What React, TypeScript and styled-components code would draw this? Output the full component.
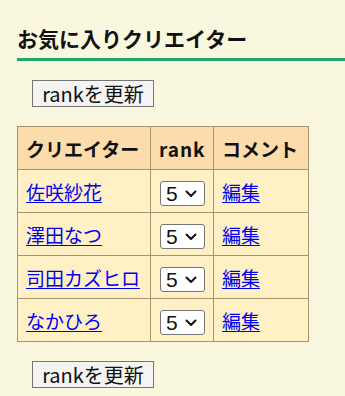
import React from "react";
import styled, { createGlobalStyle } from "styled-components";

const creators = ["佐咲紗花", "澤田なつ", "司田カズヒロ", "なかひろ"];

const GlobalStyle = createGlobalStyle`
  html, body {
    margin: 0;
    padding: 0;
    background: #f9f8df;
  }
  body {
    font-family: "Noto Sans CJK JP", "Liberation Sans", sans-serif;
    color: #111;
  }
`;

const Page = styled.div`
  padding: 24px 0 0 17px;
  overflow: hidden;
`;

const Title = styled.h2`
  margin: 0;
  font-size: 21px;
  font-weight: 700;
  line-height: 29px;
  padding-bottom: 5px;
  border-bottom: 3px solid #1ba86b;
`;

const UpdateButton = styled.button`
  display: block;
  box-sizing: border-box;
  width: 122px;
  height: 27px;
  margin-left: 15px;
  padding: 0;
  font-family: "Noto Sans CJK JP", sans-serif;
  font-size: 20px;
  line-height: 25px;
  color: #111;
  background: #f4f4f2;
  border: 1px solid #767676;
  border-radius: 0;
`;

const Top = styled.div`
  padding-top: 19px;
  padding-bottom: 19px;
`;

const Table = styled.table`
  border-collapse: collapse;
  table-layout: fixed;
  font-size: 19px;
  width: 291px;
`;

const HeadCell = styled.th<{ $w: number }>`
  width: ${(p) => p.$w}px;
  height: 43px;
  padding: 0 8px;
  box-sizing: border-box;
  text-align: left;
  font-weight: 700;
  background: #fddcab;
  border: 1px solid #a6946f;
  white-space: nowrap;
`;

const RankHead = styled.span`
  letter-spacing: 1px;
`;

const Cell = styled.td`
  height: 43px;
  padding: 0 8px;
  box-sizing: border-box;
  background: #fff0c6;
  border: 1px solid #a6946f;
  white-space: nowrap;
`;

const Link = styled.a`
  color: #0000ee;
  text-decoration: underline;
  text-underline-offset: 2px;
`;

const SelectBox = styled.div`
  position: relative;
  display: inline-flex;
  align-items: center;
  box-sizing: border-box;
  width: 45px;
  height: 25px;
  margin-left: 1px;
  background: #fff;
  border: 1px solid #767676;
  border-radius: 3px;
  vertical-align: middle;
`;

const Select = styled.select`
  appearance: none;
  border: none;
  background: transparent;
  width: 100%;
  height: 100%;
  padding: 0 0 0 5px;
  font-family: "Liberation Sans", sans-serif;
  font-size: 21px;
  color: #111;
  outline: none;
`;

const Chevron = styled.svg`
  position: absolute;
  right: 7px;
  top: 8px;
  pointer-events: none;
`;

const Bottom = styled.div`
  padding-top: 19px;
`;

export default function App() {
  return (
    <>
      <GlobalStyle />
      <Page>
        <Title>お気に入りクリエイター</Title>
        <Top>
          <UpdateButton>rankを更新</UpdateButton>
        </Top>
        <Table>
          <thead>
            <tr>
              <HeadCell $w={133}>クリエイター</HeadCell>
              <HeadCell $w={63}>
                <RankHead>rank</RankHead>
              </HeadCell>
              <HeadCell $w={95}>コメント</HeadCell>
            </tr>
          </thead>
          <tbody>
            {creators.map((name) => (
              <tr key={name}>
                <Cell>
                  <Link href="#">{name}</Link>
                </Cell>
                <Cell>
                  <SelectBox>
                    <Select defaultValue="5">
                      {[1, 2, 3, 4, 5].map((n) => (
                        <option key={n} value={n}>
                          {n}
                        </option>
                      ))}
                    </Select>
                    <Chevron width="12" height="8" viewBox="0 0 12 8">
                      <path
                        d="M1.5 1.5 L6 6 L10.5 1.5"
                        fill="none"
                        stroke="#111"
                        strokeWidth="2"
                        strokeLinecap="round"
                        strokeLinejoin="round"
                      />
                    </Chevron>
                  </SelectBox>
                </Cell>
                <Cell>
                  <Link href="#">編集</Link>
                </Cell>
              </tr>
            ))}
          </tbody>
        </Table>
        <Bottom>
          <UpdateButton>rankを更新</UpdateButton>
        </Bottom>
      </Page>
    </>
  );
}
